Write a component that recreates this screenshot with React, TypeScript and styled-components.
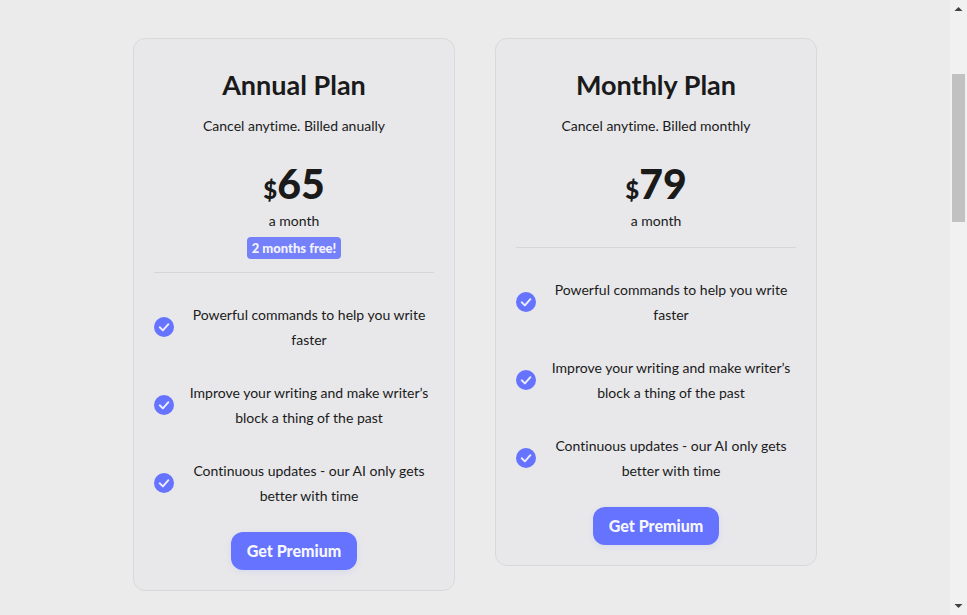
import React from "react";
import styled, { createGlobalStyle } from "styled-components";

const GlobalStyle = createGlobalStyle`
  * { box-sizing: border-box; }
  body {
    margin: 0;
    background: #ebebeb;
    color: #1a1a1a;
    font-family: Lato, "Open Sans", sans-serif;
    font-size: 14px;
    line-height: 25px;
    font-variant-ligatures: none;
    overflow: hidden;
  }
`;

const Page = styled.div`
  display: flex;
  height: 100vh;
`;

const Plans = styled.main`
  flex: 1;
  min-width: 0;
  display: flex;
  flex-wrap: wrap;
  justify-content: center;
  align-items: flex-start;
  gap: 40px;
  padding: 38px 20px 24px;
`;

const Card = styled.section`
  flex: 0 1 322px;
  display: flex;
  flex-direction: column;
  align-items: center;
  padding: 28px 20px 20px;
  border: 1px solid #d9d9dc;
  border-radius: 12px;
  background: #e8e8ea;
  text-align: center;
`;

const Heading = styled.header`
  width: 100%;
  display: flex;
  flex-direction: column;
  align-items: center;
  padding-bottom: 13px;
  border-bottom: 1px solid #d6d6d9;
`;

const Title = styled.h2`
  margin: 0 0 10px;
  font-size: 27px;
  line-height: 36px;
  font-weight: 700;
`;

const Text = styled.p`
  margin: 0;
`;

const Price = styled.p`
  margin: 22px 0 0;
  font-size: 41px;
  line-height: 48px;
  font-weight: 900;
`;

const Currency = styled.span`
  font-size: 24px;
  line-height: 24px;
`;

const Period = styled.p`
  margin: 0;
  line-height: 26px;
`;

const Badge = styled.strong`
  margin-top: 3px;
  padding: 0 5px;
  border-radius: 4px;
  background: #7581fa;
  color: #f3f3ff;
  font-size: 13px;
  line-height: 22px;
  font-weight: 900;
`;

const Features = styled.ul`
  width: 100%;
  margin: 29px 0 24px;
  padding: 0;
  list-style: none;
  display: flex;
  flex-direction: column;
  gap: 28px;
`;

const Feature = styled.li`
  display: flex;
  align-items: center;
  gap: 10px;
`;

const FeatureText = styled.span`
  flex: 1;
`;

const CheckIcon = styled.svg`
  flex: none;
  width: 20px;
  height: 20px;
`;

const PremiumButton = styled.button`
  height: 38px;
  padding: 0 16px;
  border: 0;
  border-radius: 12px;
  background: #6573ff;
  color: #f6f6ff;
  font: 900 16px/24px Lato, "Open Sans", sans-serif;
  box-shadow: 0 2px 6px rgba(101, 115, 255, 0.12);
  cursor: pointer;
`;

const Scrollbar = styled.div`
  flex: 0 0 17px;
  display: flex;
  flex-direction: column;
  align-items: center;
  background: #f1f1f1;
`;

const ScrollArrow = styled.svg`
  flex: none;
  width: 17px;
  height: 17px;
  fill: #404040;
`;

const Track = styled.div`
  flex: 1;
  width: 13px;
  display: grid;
  grid-template-rows: 57fr 148fr 376fr;
`;

const Thumb = styled.div`
  grid-row: 2;
  background: #c1c1c1;
`;

interface Plan {
  name: string;
  billing: string;
  price: number;
  offer?: string;
}

const plans: Plan[] = [
  { name: "Annual Plan", billing: "Cancel anytime. Billed anually", price: 65, offer: "2 months free!" },
  { name: "Monthly Plan", billing: "Cancel anytime. Billed monthly", price: 79 },
];

const features = [
  "Powerful commands to help you write faster",
  "Improve your writing and make writer’s block a thing of the past",
  "Continuous updates - our AI only gets better with time",
];

function Check() {
  return (
    <CheckIcon viewBox="0 0 20 20" aria-hidden="true">
      <circle cx="10" cy="10" r="10" fill="#6573ff" />
      <path d="M5.7 10.300 8.900 13.400 14.400 7.200" fill="none" stroke="#eeeeff" strokeWidth="1.900" strokeLinecap="round" strokeLinejoin="round" />
    </CheckIcon>
  );
}

function PlanCard({ plan }: { plan: Plan }) {
  return (
    <Card>
      <Heading>
        <Title>{plan.name}</Title>
        <Text>{plan.billing}</Text>
        <Price>
          <Currency>$</Currency>
          {plan.price}
        </Price>
        <Period>a month</Period>
        {plan.offer && <Badge>{plan.offer}</Badge>}
      </Heading>
      <Features>
        {features.map((feature) => (
          <Feature key={feature}>
            <Check />
            <FeatureText>{feature}</FeatureText>
          </Feature>
        ))}
      </Features>
      <PremiumButton type="button">Get Premium</PremiumButton>
    </Card>
  );
}

export default function App() {
  return (
    <>
      <GlobalStyle />
      <Page>
        <Plans>
          {plans.map((plan) => (
            <PlanCard key={plan.name} plan={plan} />
          ))}
        </Plans>
        <Scrollbar aria-hidden="true">
          <ScrollArrow viewBox="0 0 17 17">
            <path d="M4.500 11h8L8.500 7z" />
          </ScrollArrow>
          <Track>
            <Thumb />
          </Track>
          <ScrollArrow viewBox="0 0 17 17">
            <path d="M4.500 6h8l-4 4z" />
          </ScrollArrow>
        </Scrollbar>
      </Page>
    </>
  );
}
